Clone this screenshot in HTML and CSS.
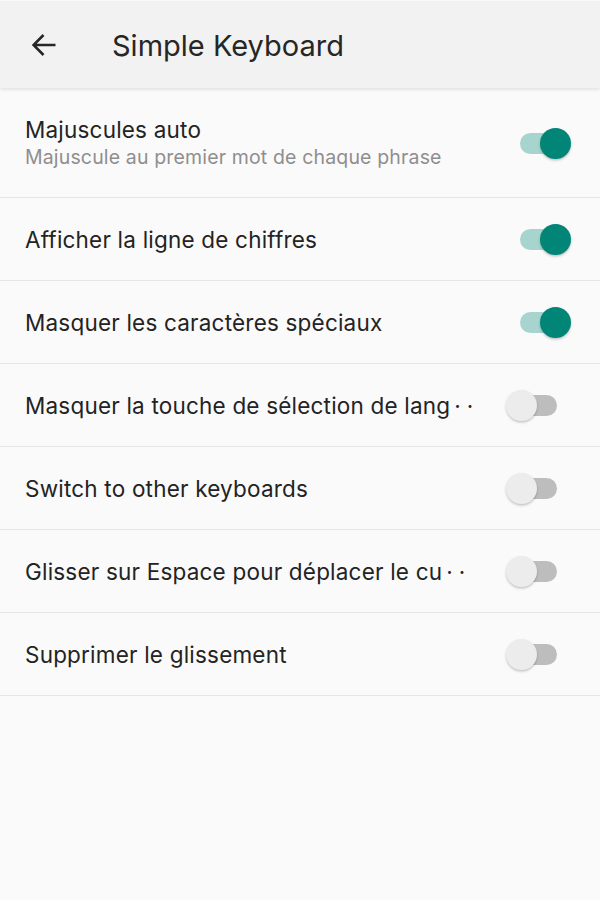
FILE: index.html
```html
<!DOCTYPE html>
<html lang="fr">
<head>
<meta charset="utf-8">
<title>Simple Keyboard</title>
<link rel="stylesheet" href="styles.css">
</head>
<body>
<header class="appbar">
  <svg class="back" width="24" height="24" viewBox="0 0 24 24" aria-hidden="true">
    <path d="M23.5 12H1.5M11.5 2L1.5 12L11.5 22" fill="none" stroke="#262626" stroke-width="2.6" stroke-linecap="butt" stroke-linejoin="miter"/>
  </svg>
  <h1 class="title">Simple Keyboard</h1>
</header>
<main class="list">
  <div class="row row-tall">
    <div class="texts">
      <div class="label">Majuscules auto</div>
      <div class="sub">Majuscule au premier mot de chaque phrase</div>
    </div>
    <div class="switch on"><span class="track"></span><span class="thumb"></span></div>
  </div>
  <div class="row">
    <div class="label">Afficher la ligne de chiffres</div>
    <div class="switch on"><span class="track"></span><span class="thumb"></span></div>
  </div>
  <div class="row">
    <div class="label">Masquer les caractères spéciaux</div>
    <div class="switch on"><span class="track"></span><span class="thumb"></span></div>
  </div>
  <div class="row">
    <div class="label">Masquer la touche de sélection de lang<span class="dots">··</span></div>
    <div class="switch off"><span class="track"></span><span class="thumb"></span></div>
  </div>
  <div class="row">
    <div class="label">Switch to other keyboards</div>
    <div class="switch off"><span class="track"></span><span class="thumb"></span></div>
  </div>
  <div class="row">
    <div class="label">Glisser sur Espace pour déplacer le cu<span class="dots">··</span></div>
    <div class="switch off"><span class="track"></span><span class="thumb"></span></div>
  </div>
  <div class="row">
    <div class="label">Supprimer le glissement</div>
    <div class="switch off"><span class="track"></span><span class="thumb"></span></div>
  </div>
</main>
</body>
</html>
```
FILE: styles.css
```css
html, body {
  margin: 0;
  padding: 0;
  background: #fafafa;
  font-family: Inter, Roboto, "Liberation Sans", sans-serif;
  color: #222222;
}

.appbar {
  height: 88px;
  background: #f2f2f2;
  display: flex;
  align-items: center;
  box-shadow: 0 2px 3px rgba(0, 0, 0, 0.09);
  border-top: 1px solid #fafafa;
  box-sizing: border-box;
  position: relative;
  z-index: 1;
}

.back {
  margin-left: 32px;
  width: 24px;
  height: 24px;
  flex: none;
}

.title {
  margin: 2px 0 0 56px;
  font-size: 29px;
  font-weight: 400;
  color: #262626;
}

.list {
  display: flex;
  flex-direction: column;
}

.row {
  height: 83px;
  box-sizing: border-box;
  border-bottom: 1px solid #e6e6e6;
  display: flex;
  align-items: center;
  justify-content: space-between;
  padding-left: 25px;
}

.row-tall {
  height: 110px;
}

.texts {
  display: flex;
  flex-direction: column;
}

.label {
  font-size: 22.5px;
  letter-spacing: 0.2px;
  color: #232323;
  white-space: nowrap;
}

.sub {
  font-size: 19.5px;
  letter-spacing: 0.15px;
  color: #8e8e8e;
  margin-top: 2px;
}

.dots {
  letter-spacing: 6px;
  margin-left: 4px;
}

.switch {
  position: relative;
  width: 52px;
  height: 32px;
  flex: none;
}

.switch.on {
  margin-right: 29px;
}

.switch.off {
  margin-right: 42px;
}

.track {
  position: absolute;
  left: 1px;
  right: 1px;
  top: 6px;
  height: 21px;
  border-radius: 11px;
}

.thumb {
  position: absolute;
  top: 1px;
  width: 31px;
  height: 31px;
  border-radius: 50%;
  box-shadow: 0 1.5px 2.5px rgba(0, 0, 0, 0.22);
}

.on .track {
  background: #a7d4cf;
}

.on .thumb {
  right: 0;
  background: #008577;
}

.off .track {
  background: #bdbdbd;
}

.off .thumb {
  left: 0;
  background: #ececec;
}
```
